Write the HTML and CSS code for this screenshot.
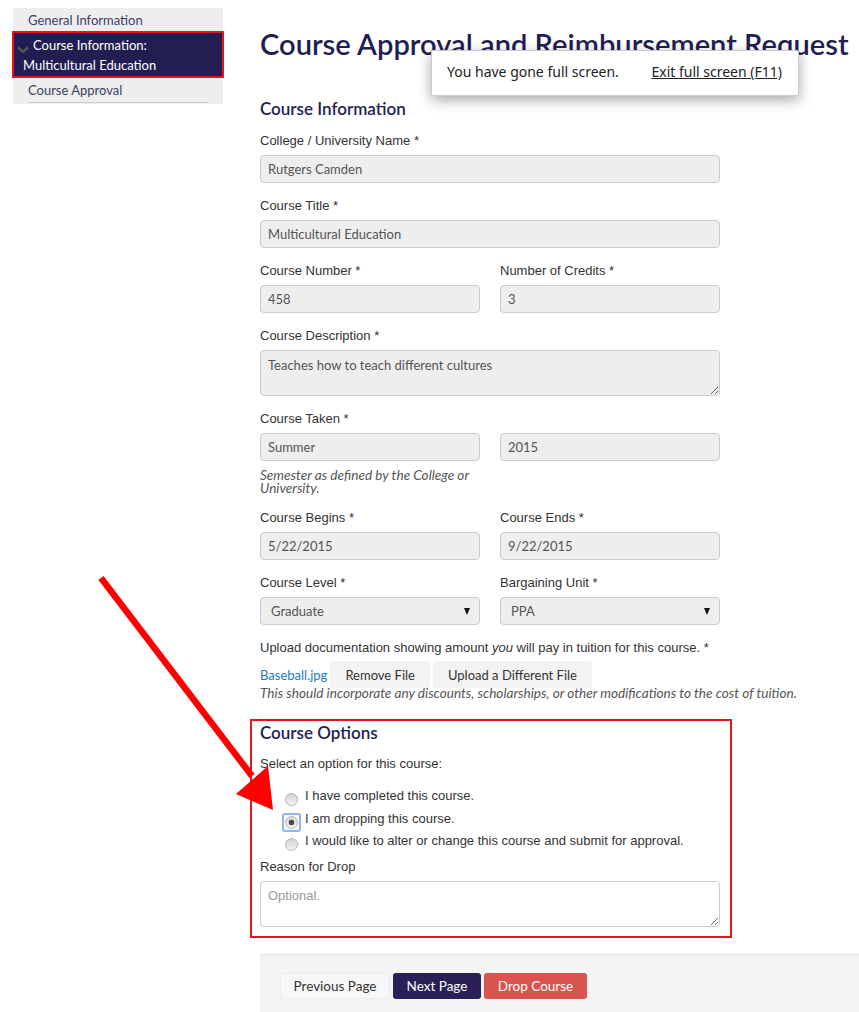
FILE: index.html
```html
<!DOCTYPE html>
<html lang="en">

<head>
    <meta charset="UTF-8">
    <title>Course Approval and Reimbursement Request</title>
    <link rel="stylesheet" href="styles.css">
</head>

<body>

<div class="layout">
    <aside class="sidebar">
        <a href="#" class="side-link">General Information</a>
        <a href="#" class="side-link active">
            <svg class="chev" width="12" height="8" viewBox="0 0 12 8"><path d="M1 1.5 L6 6 L11 1.5" fill="none" stroke="#555" stroke-width="2.4"/></svg>
            <span class="first">Course Information:</span><br>Multicultural Education
        </a>
        <a href="#" class="side-link last">Course Approval</a>
    </aside>

    <main class="main">
        <h1 class="page-title">Course Approval and Reimbursement Request</h1>

        <form class="course-form">
            <h3 class="section-title">Course Information</h3>

            <div class="form-group">
                <label>College / University Name *</label>
                <input type="text" value="Rutgers Camden" readonly>
            </div>

            <div class="form-group">
                <label>Course Title *</label>
                <input type="text" value="Multicultural Education" readonly>
            </div>

            <div class="form-row">
                <div class="form-group">
                    <label>Course Number *</label>
                    <input type="text" value="458" readonly>
                </div>
                <div class="form-group">
                    <label>Number of Credits *</label>
                    <input type="text" value="3" readonly>
                </div>
            </div>

            <div class="form-group">
                <label>Course Description *</label>
                <textarea class="desc" readonly>Teaches how to teach different cultures</textarea>
            </div>

            <div class="form-group">
                <label>Course Taken *</label>
                <div class="form-row inner">
                    <div>
                        <input type="text" value="Summer" readonly>
                        <p class="help narrow">Semester as defined by the College or University.</p>
                    </div>
                    <div>
                        <input type="text" value="2015" readonly>
                    </div>
                </div>
            </div>

            <div class="form-row">
                <div class="form-group">
                    <label>Course Begins *</label>
                    <input type="text" value="5/22/2015" readonly>
                </div>
                <div class="form-group">
                    <label>Course Ends *</label>
                    <input type="text" value="9/22/2015" readonly>
                </div>
            </div>

            <div class="form-row">
                <div class="form-group">
                    <label>Course Level *</label>
                    <div class="select-wrap">
                        <select><option>Graduate</option></select>
                    </div>
                </div>
                <div class="form-group">
                    <label>Bargaining Unit *</label>
                    <div class="select-wrap">
                        <select><option>PPA</option></select>
                    </div>
                </div>
            </div>

            <div class="form-group upload">
                <label>Upload documentation showing amount <em>you</em> will pay in tuition for this course. *</label>
                <div class="file-row">
                    <a href="#" class="file-link">Baseball.jpg</a>
                    <button type="button" class="file-btn">Remove File</button>
                    <button type="button" class="file-btn">Upload a Different File</button>
                </div>
                <p class="help">This should incorporate any discounts, scholarships, or other modifications to the cost of tuition.</p>
            </div>

            <div class="options-box">
                <h3 class="section-title">Course Options</h3>
                <p class="plain">Select an option for this course:</p>
                <ul class="radio-list">
                    <li><span class="radio-slot"><input type="radio" name="opt" id="opt1"></span><label for="opt1">I have completed this course.</label></li>
                    <li><span class="radio-slot focus"><input type="radio" name="opt" id="opt2" checked></span><label for="opt2">I am dropping this course.</label></li>
                    <li><span class="radio-slot"><input type="radio" name="opt" id="opt3"></span><label for="opt3">I would like to alter or change this course and submit for approval.</label></li>
                </ul>
                <div class="form-group last">
                    <label>Reason for Drop</label>
                    <textarea class="reason" placeholder="Optional."></textarea>
                </div>
            </div>
        </form>

        <div class="actions">
            <button type="button" class="btn btn-light">Previous Page</button>
            <button type="button" class="btn btn-navy">Next Page</button>
            <button type="button" class="btn btn-red">Drop Course</button>
        </div>
    </main>
</div>

<!-- Fullscreen notice -->
<div class="fs-notice">
    <span>You have gone full screen.</span>
    <a href="#">Exit full screen (F11)</a>
</div>

<!-- Annotation arrow -->
<svg class="arrow" width="200" height="250" viewBox="0 0 200 250">
    <line x1="7" y1="6" x2="158" y2="204" stroke="#ff0000" stroke-width="6.5"/>
    <polygon points="142,222 174,194 179,238" fill="#ff0000"/>
</svg>

</body>

</html>
```

FILE: styles.css
```css
* {
    margin: 0;
    padding: 0;
    box-sizing: border-box;
}

body {
    font-family: 'Liberation Sans', Arial, sans-serif;
    font-size: 13px;
    color: #333;
    background-color: #fff;
    width: 859px;
    height: 1012px;
    overflow: hidden;
}

.layout {
    display: flex;
    align-items: flex-start;
}

/* Sidebar */
.sidebar {
    width: 210px;
    margin-left: 13px;
    margin-top: 8px;
    background-color: #eee;
    display: flex;
    flex-direction: column;
}

.side-link {
    font-family: Lato, sans-serif;
    font-size: 13px;
    color: #3a3f66;
    text-decoration: none;
    padding: 4px 15px 3px 15px;
    line-height: 16px;
}

.side-link.active {
    position: relative;
    margin: 0 -1px;
    background-color: #231e51;
    border: 2px solid #e8141c;
    color: #fff;
    padding: 2px 8px 1px 9px;
    line-height: 20px;
}

.side-link.active .first {
    margin-left: 10px;
}

.side-link .chev {
    position: absolute;
    left: 3px;
    top: 13px;
}

.side-link.last {
    padding-top: 4px;
    padding-bottom: 4px;
    border-bottom: 1px solid #ccc;
    margin: 0 15px 1px 15px;
    padding-left: 0;
    padding-right: 0;
}

/* Main */
.main {
    width: 599px;
    margin-left: 37px;
    margin-top: 25px;
}

.page-title {
    font-family: Lato, sans-serif;
    font-weight: 600;
    font-size: 29.1px;
    line-height: 38px;
    color: #231e51;
    white-space: nowrap;
}

.course-form {
    width: 460px;
    margin-top: 36px;
}

.section-title {
    font-family: Lato, sans-serif;
    font-weight: 600;
    font-size: 17px;
    line-height: 20px;
    color: #231e51;
    margin-bottom: 14px;
}

.form-group {
    margin-bottom: 15px;
}

.form-group label,
.plain {
    display: block;
    line-height: 15px;
    margin-bottom: 7px;
}

.form-row {
    display: grid;
    grid-template-columns: 1fr 1fr;
    column-gap: 20px;
}

.form-group input[type="text"],
.form-group textarea,
.select-wrap select {
    width: 100%;
    height: 28px;
    padding: 0 7px;
    font-family: Lato, sans-serif;
    font-size: 13px;
    color: #555;
    background-color: #eee;
    border: 1px solid #ccc;
    border-radius: 4px;
    outline: none;
}

.form-group textarea {
    display: block;
    padding: 6px 7px;
    resize: vertical;
}

.form-group textarea.desc {
    height: 46px;
}

.form-group textarea.reason {
    height: 46px;
    background-color: #fff;
    font-family: 'Liberation Sans', Arial, sans-serif;
}

.reason::placeholder {
    color: #999;
}

.select-wrap {
    position: relative;
}

.select-wrap select {
    appearance: none;
    padding-left: 10px;
}

.select-wrap::after {
    content: "";
    position: absolute;
    right: 10px;
    top: 11px;
    border-left: 3.5px solid transparent;
    border-right: 3.5px solid transparent;
    border-top: 7px solid #111;
}

.help {
    font-family: Lato, sans-serif;
    font-style: italic;
    font-size: 13.6px;
    line-height: 13px;
    color: #555;
    white-space: nowrap;
}

.help.narrow {
    white-space: normal;
    width: 220px;
    margin-top: 8px;
}

.upload label {
    margin-bottom: 6px;
}

.file-row {
    display: flex;
    align-items: center;
    gap: 3px;
}

.file-link {
    font-family: Lato, sans-serif;
    color: #1f7bc1;
    text-decoration: none;
}

.file-btn {
    font-family: Lato, sans-serif;
    font-size: 13px;
    color: #333;
    background-color: #f3f3f3;
    border: none;
    border-radius: 3px;
    height: 27px;
    padding: 0 15px;
}

.upload .help {
    margin-top: -1px;
}

/* Options box */
.options-box {
    margin: 19px -12px 0 -10px;
    border: 2px solid #e8141c;
    padding: 2px 10px 0 8px;
}

.options-box .section-title {
    margin-bottom: 13px;
}

.radio-list {
    list-style: none;
    margin: 17px 0 3px 25px;
}

.radio-list li {
    display: flex;
    align-items: flex-start;
    height: 22.5px;
}

.radio-slot {
    display: inline-flex;
    margin-top: 5px;
    margin-right: 7px;
}

.radio-slot.focus {
    margin: 2px 4px -3px -3px;
    padding: 1px;
    border: 2px solid #8fb6ee;
    border-radius: 3px;
}

.radio-list input {
    appearance: none;
    width: 13px;
    height: 13px;
    border: 1px solid #b4b4b4;
    border-radius: 50%;
    background: linear-gradient(#d6d6d6, #f2f2f2);
}

.radio-list input:checked {
    background: radial-gradient(circle, #4a4a4a 0, #4a4a4a 2.5px, transparent 3.2px), linear-gradient(#d6d6d6, #f2f2f2);
}

.radio-list label {
    line-height: 15px;
}

.form-group.last {
    margin-bottom: 9px;
}

/* Bottom actions */
.actions {
    margin-top: 16px;
    background-color: #f4f4f4;
    border-top: 1px solid #e6e6e6;
    height: 60px;
    padding: 18px 0 0 20px;
    display: flex;
    align-items: flex-start;
    gap: 3px;
}

.btn {
    font-family: Lato, sans-serif;
    font-size: 13.5px;
    height: 26px;
    border: none;
    border-radius: 3px;
    cursor: pointer;
}

.btn-light {
    width: 110px;
    background-color: #f7f7f7;
    color: #333;
    border: 1px solid #ededed;
}

.btn-navy {
    width: 88px;
    background-color: #2a1f57;
    color: #fff;
}

.btn-red {
    width: 103px;
    background-color: #d9534f;
    color: #fff;
}

/* Overlays */
.fs-notice {
    position: absolute;
    left: 431px;
    top: 50px;
    width: 368px;
    height: 46px;
    background-color: #fff;
    border: 1px solid #ccc;
    border-radius: 2px;
    box-shadow: 0 4px 14px rgba(0, 0, 0, 0.35);
    display: flex;
    align-items: center;
    padding: 0 16px 4px 15px;
    font-family: 'Noto Sans', Arial, sans-serif;
    font-size: 14px;
    color: #222;
    justify-content: space-between;
}

.fs-notice a {
    color: #222;
}

.arrow {
    position: absolute;
    left: 94px;
    top: 572px;
}
```
